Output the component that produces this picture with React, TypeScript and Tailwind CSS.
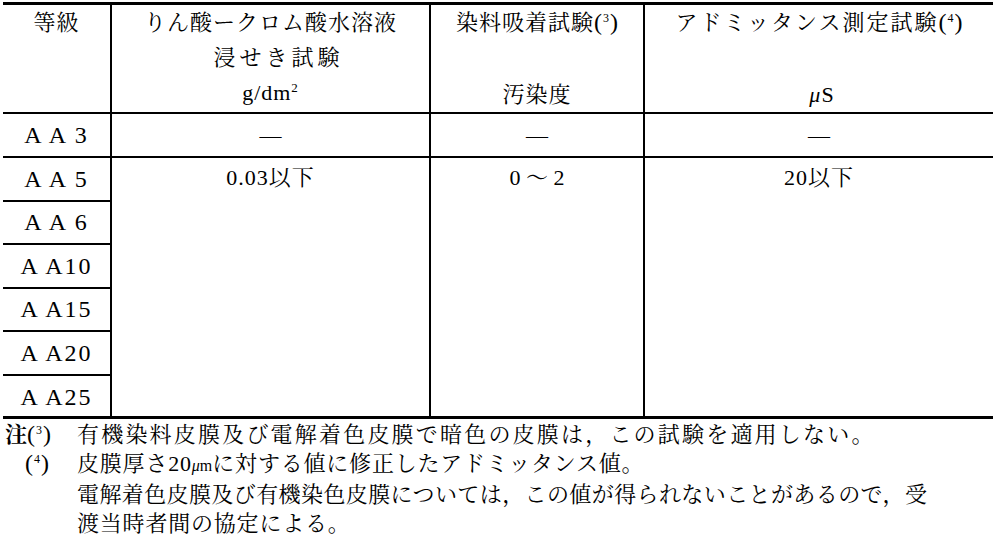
export default function App() {
  const font = "font-['Liberation_Serif','Noto_Serif_CJK_JP','Noto_Sans_CJK_JP',serif]";
  const grades = ["A A 5", "A A 6", "A A10", "A A15", "A A20", "A A25"];
  const Sup = ({ n }: { n: string }) => (
    <span className="leading-[0] tracking-normal text-[24px] font-['Liberation_Serif',serif] font-normal">
      (<span className="text-[12px] align-[8px] leading-[0] px-[1px]">{n}</span>)
    </span>
  );
  return (
    <div className={`w-[1000px] h-[557px] bg-white text-black overflow-hidden ${font} text-[22px]`}>
      <div className="ml-[3px] pt-[2px] w-[990px]">
        <div className="border-t-[3px] border-b-[3px] border-black">
          {/* header */}
          <div className="grid grid-cols-[109px_319px_214px_348px] h-[109px] border-b-2 border-black">
            <div className="border-r-2 border-black text-center leading-[35px] tracking-[1px]">等級</div>
            <div className="border-r-2 border-black text-center leading-[35px] tracking-[1px]">
              <div>りん酸ークロム酸水溶液</div>
              <div className="tracking-[4px] pl-[16px]">浸せき試験</div>
              <div>
                g/dm<span className="text-[13px] align-[8px] leading-[0]">2</span>
              </div>
            </div>
            <div className="border-r-2 border-black text-center leading-[35px] tracking-[1px]">
              <div>
                染料吸着試験<Sup n="3" />
              </div>
              <div>&nbsp;</div>
              <div className="pt-[2px]">汚染度</div>
            </div>
            <div className="text-center leading-[35px] tracking-[1px]">
              <div className="tracking-[2px]">
                アドミッタンス測定試験<Sup n="4" />
              </div>
              <div>&nbsp;</div>
              <div className="pt-[2px] pl-[6px]">
                <span className="italic">μ</span>S
              </div>
            </div>
          </div>
          {/* AA3 */}
          <div className="grid grid-cols-[109px_319px_214px_348px] h-[44px] border-b-2 border-black items-stretch">
            <div className="border-r-2 border-black flex items-center justify-center text-[24px] tracking-[2px]">A A 3</div>
            <div className="border-r-2 border-black flex items-center justify-center">—</div>
            <div className="border-r-2 border-black flex items-center justify-center">—</div>
            <div className="flex items-center justify-center">—</div>
          </div>
          {/* body */}
          <div className="grid grid-cols-[109px_319px_214px_348px] grid-rows-[repeat(6,43.5px)] h-[258px]">
            {grades.map((g, i) => (
              <div
                key={g}
                style={{ gridRow: i + 1 }}
                className={`col-start-1 border-r-2 border-black flex items-center justify-center text-[24px] tracking-[2px] ${i < 5 ? "border-b-2" : ""}`}
              >
                {g}
              </div>
            ))}
            <div className="col-start-2 row-start-1 row-span-6 border-r-2 border-black text-center leading-[40px] tracking-[1px]">0.03以下</div>
            <div className="col-start-3 row-start-1 row-span-6 border-r-2 border-black text-center leading-[40px]">0 ～ 2</div>
            <div className="col-start-4 row-start-1 row-span-6 text-center leading-[40px] tracking-[1px]">20以下</div>
          </div>
        </div>
      </div>
      {/* notes */}
      <div className="mt-[1px] leading-[29px] grid grid-cols-[77px_1fr]">
        <div className="pl-[5px] font-bold">
          注<Sup n="3" />
        </div>
        <div className="tracking-[2.2px]">有機染料皮膜及び電解着色皮膜で暗色の皮膜は，この試験を適用しない。</div>
        <div className="pl-[25px]">
          <Sup n="4" />
        </div>
        <div className="tracking-[0.8px]">
          皮膜厚さ20<span className="text-[16px] tracking-normal"><span className="italic">μ</span>m</span>に対する値に修正したアドミッタンス値。
        </div>
        <div></div>
        <div className="tracking-[0.4px]">電解着色皮膜及び有機染色皮膜については，この値が得られないことがあるので，受</div>
        <div></div>
        <div className="tracking-[0.8px]">渡当時者間の協定による。</div>
      </div>
    </div>
  );
}
